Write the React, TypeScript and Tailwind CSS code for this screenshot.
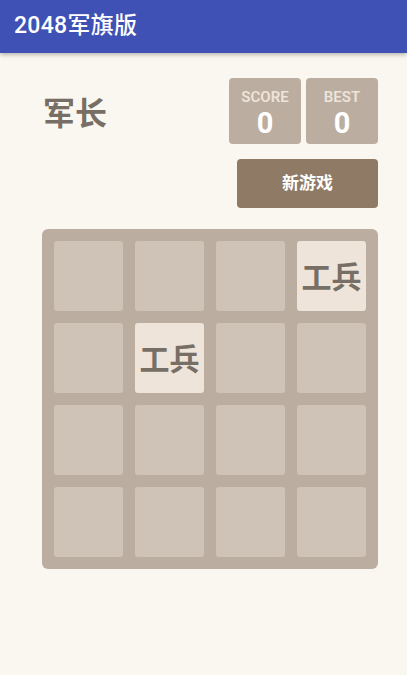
import React from 'react';

const board: (string | null)[][] = [
  [null, null, null, '工兵'],
  [null, '工兵', null, null],
  [null, null, null, null],
  [null, null, null, null],
];

const font = { fontFamily: 'Roboto, "Noto Sans CJK SC", sans-serif' };

const ScoreBox = ({ label, value }: { label: string; value: number }) => (
  <div className="w-[72px] h-[66px] rounded-[4px] bg-[#bbada0] flex flex-col items-center pt-[9px]">
    <span className="text-[15px] leading-[20px] font-semibold text-[#eee4da]">{label}</span>
    <span className="text-[29px] leading-[32px] font-bold text-white">{value}</span>
  </div>
);

const App = () => {
  return (
    <div className="min-h-[675px] bg-[#faf7f0]" style={font}>
      {/* App bar */}
      <div className="h-[53px] bg-[#3f51b5] flex items-center px-[14px] shadow-[0_2px_4px_rgba(0,0,0,0.25)] relative">
        <h1 className="text-white text-[23px] font-medium tracking-[0.3px]">2048军旗版</h1>
      </div>

      {/* Header */}
      <div className="flex justify-between pl-[43px] pr-[29px] pt-[25px]">
        <div className="h-[66px] flex items-center pt-[5px]">
          <span className="text-[32px] font-bold text-[#776e65]">军长</span>
        </div>
        <div className="flex flex-col items-end">
          <div className="flex gap-[5px]">
            <ScoreBox label="SCORE" value={0} />
            <ScoreBox label="BEST" value={0} />
          </div>
          <button className="mt-[15px] w-[141px] h-[49px] rounded-[4px] bg-[#8f7a66] text-white text-[17px] font-bold">
            新游戏
          </button>
        </div>
      </div>

      {/* Board */}
      <div className="ml-[42px] mt-[21px] w-[336px] rounded-[6px] bg-[#bbada0] p-[12px]">
        <div className="grid grid-cols-4 gap-[12px]">
          {board.flat().map((cell, i) => (
            <div
              key={i}
              className={
                cell
                  ? 'h-[70px] rounded-[3px] bg-[#eee4da] flex items-center justify-center pt-[3px] text-[30px] font-bold text-[#776e65]'
                  : 'h-[70px] rounded-[3px] bg-[#cfc3b8]'
              }
            >
              {cell}
            </div>
          ))}
        </div>
      </div>
    </div>
  );
};

export default App;
